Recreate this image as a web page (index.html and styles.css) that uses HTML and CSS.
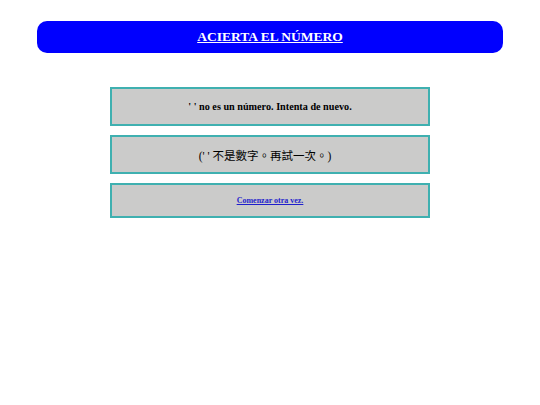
FILE: index.html
```html
<!DOCTYPE html>
<html>
	<head>
		<meta charset="UTF-8">
		<title>Acierta el número</title>
		<link rel="stylesheet" href="styles.css">
	</head>
	<body>
		<div id="header">
			<a class="title" href="#">ACIERTA EL NÚMERO</a>
		</div>
		<div id="result">
			<div class="msg msg-es">' ' no es un número. Intenta de nuevo.</div>
			<div class="msg msg-zh">(' ' 不是數字。再試一次。)</div>
			<div class="msg msg-link"><a href="#">Comenzar otra vez.</a></div>
		</div>
	</body>
</html>
```

FILE: styles.css
```css
*{margin: 0;padding: 0;}
body{background: #fff;font-family: "Liberation Serif", "Noto Sans CJK TC", serif;padding-top: 21px;}
#header{width: 466px;height: 32px;margin: 0 auto;background: #0000ff;border-radius: 10px;
display: flex;align-items: center;justify-content: center;}
#header .title{color: #fff;font-size: 13.5px;font-weight: bold;text-decoration: underline;}
#result{width: 320px;margin: 34px auto 0;display: flex;flex-direction: column;gap: 9px;}
.msg{height: 35px;border: 2px solid #3fb0b0;background: #cbcbca;
display: flex;align-items: center;justify-content: center;color: #000;}
.msg-es{font-size: 10.2px;font-weight: bold;}
.msg-zh{font-size: 11.5px;padding-right: 10px;}
.msg-link{height: 31px;font-size: 8px;font-weight: bold;}
.msg-link a{color: #1f1fcc;}
```
